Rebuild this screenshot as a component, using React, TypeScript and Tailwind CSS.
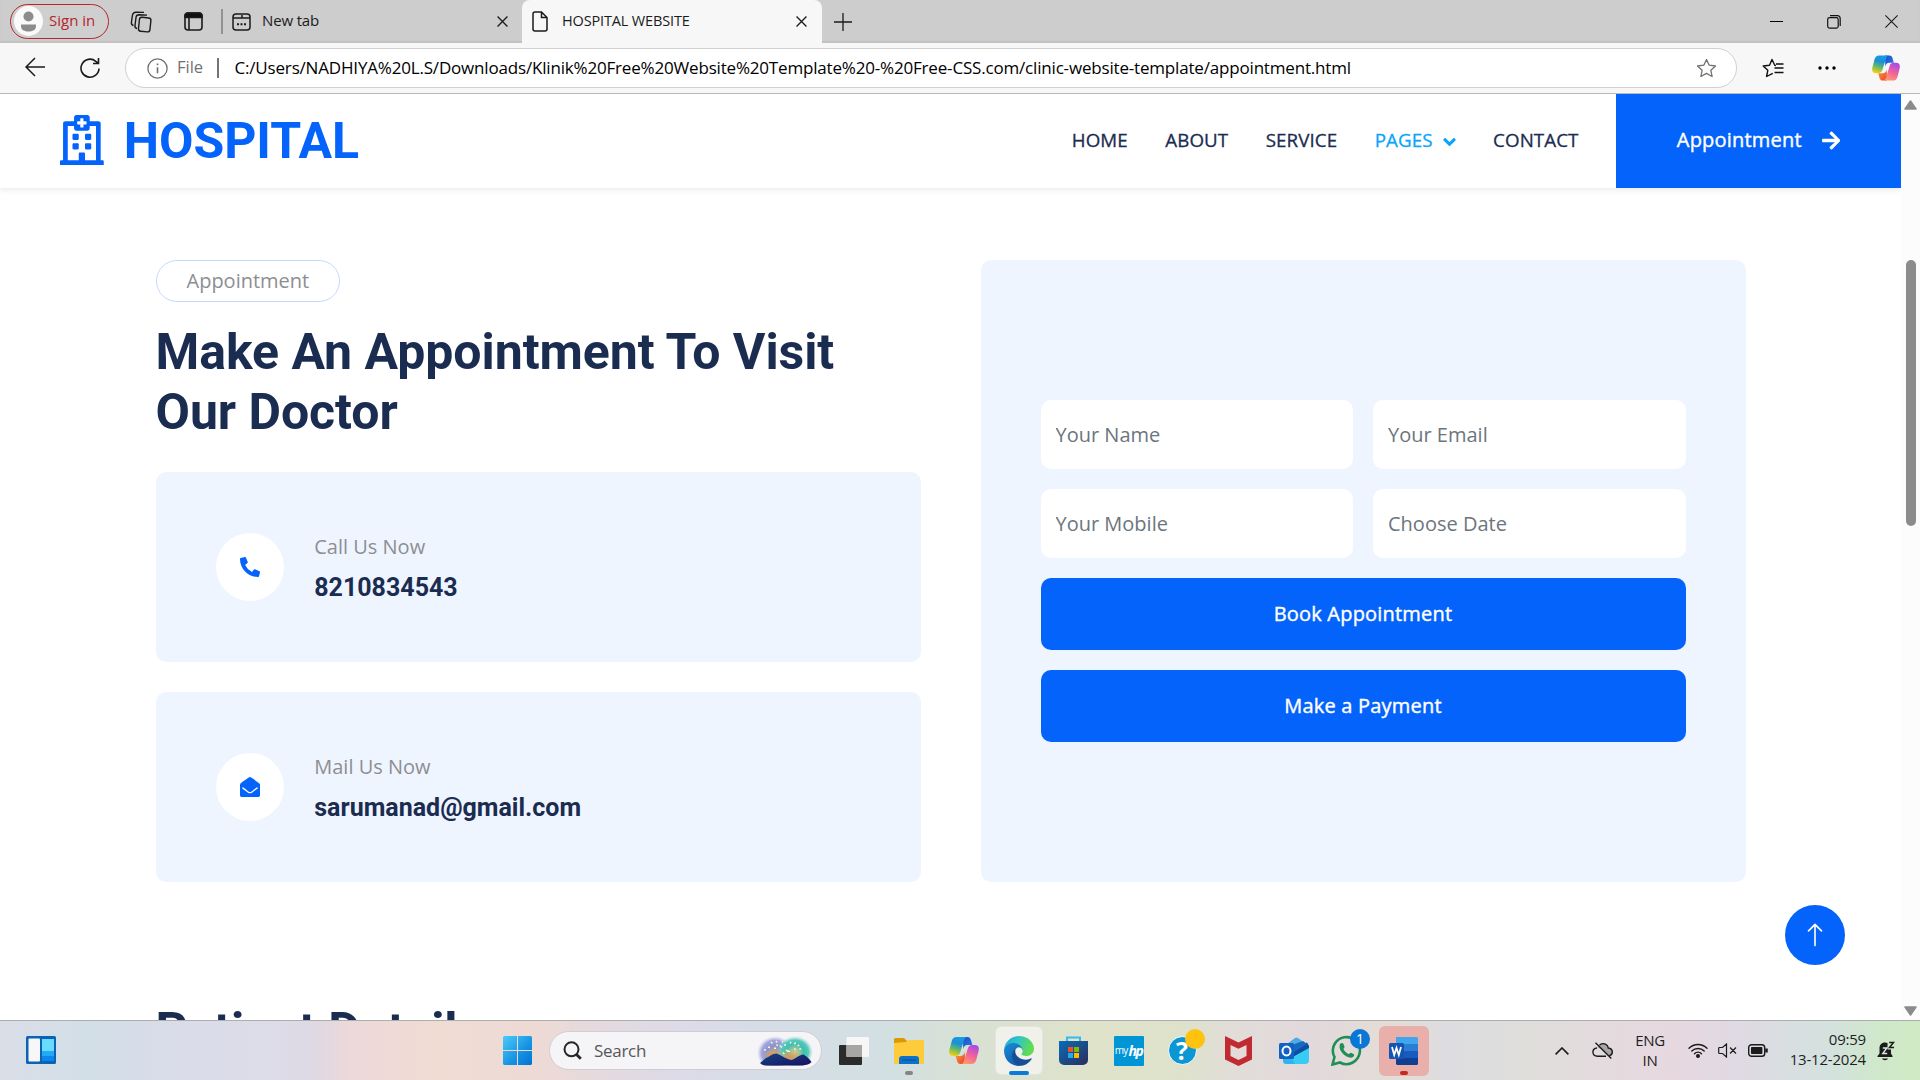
import React from "react";
import { FaRegHospital, FaAngleDown, FaArrowRight, FaPhoneAlt, FaEnvelopeOpen } from "react-icons/fa";
import { BsArrowUp } from "react-icons/bs";

const OPEN = "font-['Open_Sans',sans-serif]";
const ROBOTO = "font-['Roboto',sans-serif]";

function CloseX({ className = "" }: { className?: string }) {
  return (
    <svg className={className} viewBox="0 0 10 10" fill="none" stroke="#1a1a1a" strokeWidth="1.2">
      <path d="M0.5 0.5 9.5 9.5M9.5 0.5 0.5 9.5" />
    </svg>
  );
}

function Copilot({ id, className }: { id: string; className: string }) {
  return (
    <svg className={className} viewBox="0 0 30 27">
      <defs>
        <linearGradient id={id + "a"} x1="0.6" y1="0" x2="0.3" y2="1">
          <stop offset="0" stopColor="#159de8" />
          <stop offset="0.35" stopColor="#1c8fd6" />
          <stop offset="0.65" stopColor="#62b96a" />
          <stop offset="1" stopColor="#f4cf12" />
        </linearGradient>
        <linearGradient id={id + "b"} x1="0.7" y1="0" x2="0.3" y2="1">
          <stop offset="0" stopColor="#a64be8" />
          <stop offset="0.5" stopColor="#f0609c" />
          <stop offset="1" stopColor="#ff9a6c" />
        </linearGradient>
        <linearGradient id={id + "c"} x1="0" y1="0" x2="1" y2="1">
          <stop offset="0" stopColor="#1b4fc4" />
          <stop offset="1" stopColor="#2a7df0" />
        </linearGradient>
        <linearGradient id={id + "d"} x1="0" y1="0" x2="1" y2="1">
          <stop offset="0" stopColor="#f9a13a" />
          <stop offset="1" stopColor="#e9412f" />
        </linearGradient>
      </defs>
      <path d="M14 0h4.5c2.2 0 3 1.3 3.6 3.4L23.400 8h-4.900c-2.500 0-3.600 1.500-4.300 3.900Z" fill={`url(#${id}c)`} />
      <path d="M16 27h-4.500c-2.200 0-3-1.300-3.600-3.400L6.600 19h4.900c2.500 0 3.600-1.500 4.300-3.900Z" fill={`url(#${id}d)`} />
      <path d="M7.600 0h10.200c-1.500.3-2.300 1.500-3 3.800l-3.600 11.700c-.7 2.300-2 3.500-4.400 3.500H4.300C.6 19-.4 16.500.4 13L2.700 4.200C3.500 1.400 5 0 7.600 0Z" fill={`url(#${id}a)`} />
      <path d="M22.400 27H12.200c1.500-.3 2.300-1.500 3-3.800l3.600-11.700c.7-2.300 2-3.500 4.400-3.500h2.500c3.700 0 4.700 2.500 3.900 6l-2.300 8.800c-.8 2.800-2.300 4.200-4.900 4.200Z" fill={`url(#${id}b)`} />
    </svg>
  );
}

function TabStrip() {
  return (
    <div className="flex h-[43px] items-center bg-[#cdcdcd] text-[15px] text-[#1b1b1b] shadow-[inset_0_-2px_1px_#c2c2c2]">
      <div className="ml-[10px] mb-[1px] flex h-[35px] w-[99px] shrink-0 items-center rounded-full border-[1.5px] border-[#b3262b] bg-[#d0cfcf]">
        <svg className="ml-[3px] h-[30px] w-[29px]" viewBox="0 0 29 30">
          <ellipse cx="14.500" cy="15" rx="14.500" ry="15" fill="#fafafa" />
          <circle cx="14.500" cy="10.500" r="5" fill="#8c8c8c" />
          <path d="M7 18.500h15c.5 5-2.500 7-7.500 7s-8-2-7.500-7Z" fill="#8c8c8c" />
        </svg>
        <span className="ml-[6px] whitespace-nowrap pb-[2px] text-[#b3262b]">Sign in</span>
      </div>
      <svg className="ml-[21px] h-[22px] w-[22px] shrink-0" viewBox="0 0 22 22" fill="none" stroke="#1b1b1b" strokeWidth="1.400">
        <rect x="9" y="6.500" width="11.500" height="14" rx="2.500" transform="rotate(6 14 13)" />
        <path d="M7 17.500c-1.500-.3-2.200-1.500-2-3L6 6.500c.2-1.700 1.200-2.700 3-2.700l8 .3M3.500 14.500C2 14 1.200 13 1.400 11.500l1-7C2.700 2.500 4 1.200 6 1.200l8 .2" />
      </svg>
      <svg className="ml-[32px] h-[19px] w-[19px] shrink-0" viewBox="0 0 19 19" fill="none" stroke="#1b1b1b" strokeWidth="1.600">
        <rect x="1" y="1" width="17" height="17" rx="3" />
        <path d="M1 5V4a3 3 0 0 1 3-3h11a3 3 0 0 1 3 3v1.500H1Z" fill="#111" />
        <path d="M5 6v12" />
      </svg>
      <div className="ml-[18px] h-[25px] w-[2px] shrink-0 bg-[#929292]" />
      <svg className="ml-[9px] h-[18px] w-[19px] shrink-0" viewBox="0 0 19 18" fill="none" stroke="#1b1b1b" strokeWidth="1.500">
        <rect x="1" y="1" width="17" height="16" rx="3" />
        <path d="M1 5h7l2 0V2M10 5h8" />
        <path d="M5 11.200h2M8.500 11.200h2M12 11.200h2" strokeWidth="2" />
      </svg>
      <span className="ml-[11px] w-[235px] shrink-0 pb-[2px] tracking-[-0.15px]">New tab</span>
      <CloseX className="h-[11px] w-[11px] shrink-0" />
      <div className="ml-[14px] flex h-[43px] w-[300px] shrink-0 items-center rounded-t-[8px] bg-[#f7f7f7]">
        <svg className="ml-[10px] h-[21px] w-[16px]" viewBox="0 0 16 21" fill="none" stroke="#1b1b1b" strokeWidth="1.500">
          <path d="M3 1h6.500L15 6.500V18a2 2 0 0 1-2 2H3a2 2 0 0 1-2-2V3a2 2 0 0 1 2-2ZM9.500 1v5.500H15" />
        </svg>
        <span className="ml-[14px] w-[234px] whitespace-nowrap pb-[2px] text-[14.500px] tracking-[-0.15px]">HOSPITAL WEBSITE</span>
        <CloseX className="h-[11px] w-[11px]" />
      </div>
      <svg className="ml-[12px] h-[18px] w-[18px] shrink-0" viewBox="0 0 18 18" stroke="#1b1b1b" strokeWidth="1.300">
        <path d="M9 0v18M0 9h18" />
      </svg>
      <div className="ml-auto mr-[22px] flex items-center">
        <div className="h-px w-[13px] bg-black" />
        <svg className="ml-[44px] h-[14px] w-[14px]" viewBox="0 0 14 14" fill="none" stroke="#111" strokeWidth="1.200">
          <rect x="0.700" y="2.600" width="10.500" height="10.500" rx="1.800" />
          <path d="M3 .7h7.500a2.700 2.700 0 0 1 2.700 2.700V11" />
        </svg>
        <svg className="ml-[44px] h-[13px] w-[13px]" viewBox="0 0 13 13" stroke="#1a1a1a" strokeWidth="1.100">
          <path d="M.4.400l12.200 12.200M12.600.4.400 12.600" />
        </svg>
      </div>
    </div>
  );
}

const STAR = "m10.500 1.500 2.700 5.700 6.300.8-4.600 4.300 1.200 6.200-5.600-3.100-5.600 3.100 1.200-6.200L1.500 8l6.300-.8Z";

function Toolbar() {
  return (
    <div className="flex h-[51px] items-center border-b border-[#b9b9b9] bg-[#f7f7f7]">
      <svg className="ml-[25px] mb-[2px] h-[20px] w-[20px]" viewBox="0 0 20 20" fill="none" stroke="#1b1b1b" strokeWidth="1.500">
        <path d="M20 10H1M10 1 1 10l9 9" />
      </svg>
      <svg className="ml-[35px] mb-[1px] h-[22px] w-[20px]" viewBox="0 0 20 22" fill="none" stroke="#1b1b1b" strokeWidth="1.600">
        <path d="M19 11.500a9 9 0 1 1-3.200-7.200L18 6.200M18.500 1v5.500H13" />
      </svg>
      <div className="ml-[25px] flex h-[40px] w-[1612px] items-center rounded-full border border-[#d0d0d0] bg-white">
        <svg className="ml-[21px] h-[21px] w-[21px]" viewBox="0 0 21 21" fill="none" stroke="#717171" strokeWidth="1.300">
          <circle cx="10.500" cy="10.500" r="9.600" />
          <path d="M10.500 9.300v6M10.500 5.500v1.800" strokeWidth="1.600" />
        </svg>
        <span className="ml-[9px] w-[40px] pb-[1px] text-[16.500px] text-[#717171]">File</span>
        <div className="h-[20px] w-[1.500px] bg-[#757575]" />
        <span className="ml-[16px] whitespace-nowrap pb-[1px] text-[17px] tracking-[-0.18px] text-black">
          C:/Users/NADHIYA%20L.S/Downloads/Klinik%20Free%20Website%20Template%20-%20Free-CSS.com/clinic-website-template/appointment.html
        </span>
        <svg className="ml-auto mr-[19px] h-[20px] w-[21px]" viewBox="0 0 21 20" fill="none" stroke="#717171" strokeWidth="1.300" strokeLinejoin="round">
          <path d={STAR} />
        </svg>
      </div>
      <svg className="ml-[25px] h-[20px] w-[22px]" viewBox="0 0 22 20" fill="none" stroke="#111" strokeWidth="1.400" strokeLinejoin="round">
        <path d="M14 7.500 12.800 7.200 10 1.500 7.500 7.200 1.200 8l4.600 4.300L4.600 18.500 10.800 15.300M12.500 10h9M12.500 14.500h9M14 6h7.500" />
      </svg>
      <svg className="ml-[33px] h-[4px] w-[20px]" viewBox="0 0 20 4">
        <circle cx="3" cy="2" r="1.700" /><circle cx="10" cy="2" r="1.700" /><circle cx="17" cy="2" r="1.700" />
      </svg>
      <Copilot id="tb" className="ml-[35px] h-[26px] w-[28px]" />
    </div>
  );
}

const MEDIUM = "tracking-[0.2px] [-webkit-text-stroke:0.4px_white]";

function SiteNav() {
  return (
    <nav className="relative flex h-[94px] shrink-0 items-center bg-white shadow-[0_2.5px_5px_rgba(0,0,0,0.075)]">
      <div className={`mb-[2px] ml-[60px] flex items-center text-[50px] font-bold leading-[60px] tracking-[-0.05px] text-[#0463fa] ${ROBOTO}`}>
        <FaRegHospital className="mr-[20px] h-[50px] w-[43.750px]" />
        <span className="pt-[1px]">HOSPITAL</span>
      </div>
      <div className="mb-[2px] ml-auto mr-[37.500px] flex items-center gap-[37.500px] whitespace-nowrap text-[18.750px] leading-[28px] tracking-[0.08px] text-[#1b2c51] [-webkit-text-stroke:0.3px]">
        <span>HOME</span>
        <span>ABOUT</span>
        <span>SERVICE</span>
        <span className="flex items-center text-[#0aa5fb]">
          PAGES
          <FaAngleDown className="ml-[10px] mt-[3px] h-[20px] w-[13px]" />
        </span>
        <span>CONTACT</span>
      </div>
      <button className={`flex h-full w-[285px] items-center justify-center bg-[#0463fa] pb-[2px] text-[20px] text-white ${MEDIUM}`}>
        Appointment
        <FaArrowRight className="ml-[20px] h-[21px] w-[18.500px]" />
      </button>
    </nav>
  );
}

function ContactCard({ icon, label, value }: { icon: React.ReactNode; label: string; value: string }) {
  return (
    <div className="flex h-[190px] items-center rounded-[10px] bg-[#eff5ff] p-[60px]">
      <div className="flex h-[68.750px] w-[68.750px] items-center justify-center rounded-full bg-white text-[#0463fa]">{icon}</div>
      <div className="ml-[30px]">
        <p className="mb-[10px] text-[20px] leading-[30px] text-[#8d8e92]">{label}</p>
        <h5 className={`pt-[1px] text-[25px] font-bold leading-[29px] text-[#1b2c51] ${ROBOTO}`}>{value}</h5>
      </div>
    </div>
  );
}

function Field({ text }: { text: string }) {
  return (
    <input
      placeholder={text}
      className="h-[69px] w-full min-w-0 rounded-[10px] bg-white px-[15px] text-[20px] placeholder:text-[#6c757d] placeholder:opacity-100"
    />
  );
}

function Site() {
  const h1 = `text-[50px] font-bold leading-[60px] tracking-[-0.06px] text-[#1b2c51] ${ROBOTO}`;
  const btn = `h-[72px] rounded-[10px] bg-[#0463fa] text-[20px] text-white ${MEDIUM}`;
  return (
    <div className="flex h-[926px]">
      <div className="relative flex w-[1901px] flex-col overflow-hidden bg-white">
        <SiteNav />
        <main className="mx-auto mt-[72px] w-[1590px] shrink-0">
          <section className="grid h-[622px] grid-cols-2 gap-[60px]">
            <div>
              <p className="mb-[20px] flex h-[42px] w-fit items-center rounded-full border border-[#c3dafe] px-[30px] text-[20px] text-[#8d8e92]">
                Appointment
              </p>
              <h1 className={`mb-[30px] ${h1}`}>
                Make An Appointment To Visit
                <br />
                Our Doctor
              </h1>
              <div className="flex flex-col gap-[30px]">
                <ContactCard icon={<FaPhoneAlt className="h-[20px] w-[20px]" />} label="Call Us Now" value="8210834543" />
                <ContactCard icon={<FaEnvelopeOpen className="h-[20px] w-[20px]" />} label="Mail Us Now" value="sarumanad@gmail.com" />
              </div>
            </div>
            <div className="flex flex-col justify-center gap-[20px] rounded-[10px] bg-[#eff5ff] px-[60px]">
              <div className="grid grid-cols-2 gap-[20px]">
                <Field text="Your Name" />
                <Field text="Your Email" />
                <Field text="Your Mobile" />
                <Field text="Choose Date" />
              </div>
              <button className={btn}>Book Appointment</button>
              <button className={btn}>Make a Payment</button>
            </div>
          </section>
          <h1 className={`mt-[119px] ${h1}`}>Patient Details</h1>
        </main>
        <button className="absolute bottom-[55px] right-[56px] flex h-[60px] w-[60px] items-center justify-center rounded-full bg-[#0463fa] text-white">
          <BsArrowUp className="h-[26px] w-[26px]" />
        </button>
      </div>
      <div className="flex w-[19px] flex-col items-center bg-[#fcfcfc] pb-[4px] pt-[6px]">
        <svg className="h-[10px] w-[13px]" viewBox="0 0 13 10"><path d="M6.500 1 12 9H1Z" fill="#8b8b8b" stroke="#8b8b8b" strokeWidth="1.500" strokeLinejoin="round" /></svg>
        <div className="mt-[150px] h-[266px] w-[10px] rounded-full bg-[#8b8b8b]" />
        <svg className="mt-auto h-[10px] w-[13px]" viewBox="0 0 13 10"><path d="M6.500 9 12 1H1Z" fill="#8b8b8b" stroke="#8b8b8b" strokeWidth="1.500" strokeLinejoin="round" /></svg>
      </div>
    </div>
  );
}

function Cell({ children }: { children: React.ReactNode }) {
  return <div className="relative flex h-[58px] w-[55px] shrink-0 items-center justify-center">{children}</div>;
}

function EdgeIcon() {
  return (
    <svg className="h-[30px] w-[30px]" viewBox="0 0 256 256">
      <defs>
        <linearGradient id="e1" x1="0" y1="0" x2="1" y2="0.300"><stop offset="0" stopColor="#1fa6e0" /><stop offset="0.500" stopColor="#31c5c4" /><stop offset="1" stopColor="#62dc50" /></linearGradient>
        <linearGradient id="e2" x1="0" y1="0" x2="0.600" y2="1"><stop offset="0" stopColor="#1b8fd8" /><stop offset="1" stopColor="#0f5cae" /></linearGradient>
      </defs>
      <path d="M231 190.500a93 93 0 0 1-10.600 4.700 102 102 0 0 1-36 6.500c-47.400 0-88.700-32.600-88.700-74.500 0-11.400 6.500-21.900 16.400-27.400-42.900 1.800-53.900 46.500-53.900 72.600 0 74 68.200 81.500 82.900 81.500 7.900 0 19.900-2.300 27-4.600l1.400-.4a128 128 0 0 0 66.600-52.800 4 4 0 0 0-5.100-5.600Z" fill="#174f95" />
      <path d="M105.700 241.400a79.200 79.200 0 0 1-22.700-21.300 80.700 80.700 0 0 1 29.500-120c3.200-1.500 8.400-4.100 15.500-4a32.400 32.400 0 0 1 25.700 13 32 32 0 0 1 6.300 18.700c0-.2 24.500-79.600-80-79.600-43.900 0-80 41.600-80 78.200a130 130 0 0 0 12.100 56 128 128 0 0 0 156.400 67 75.500 75.500 0 0 1-62.800-8Z" fill="url(#e2)" />
      <path d="M152.300 148.900c-.9 1-3.400 2.500-3.400 5.600 0 2.600 1.700 5.200 4.800 7.300 14.300 10 41.400 8.600 41.500 8.600a59.600 59.600 0 0 0 30.200-8.300 61.400 61.400 0 0 0 30.500-52.900c.2-22.400-8-37.300-11.300-43.900C223.500 23.900 177.700 0 128 0A128 128 0 0 0 0 126.200c.5-36.500 36.800-66 80-66 3.500 0 23.500.3 42 10a72.500 72.500 0 0 1 30.900 29.200c6.100 10.700 7.200 24.200 7.200 29.500s-2.700 13.300-7.800 20Z" fill="url(#e1)" />
    </svg>
  );
}

function Taskbar() {
  return (
    <div className="flex h-[60px] items-center border-t border-[#adadad] bg-[linear-gradient(90deg,#dadee7_0px,#d2dfe7_90px,#dadce9_180px,#dddce9_270px,#ded9e3_315px,#edd8da_350px,#f0dcd3_430px,#eddad6_545px,#e0dae2_630px,#dddbe8_680px,#d5dde6_770px,#d3e0e2_890px,#d8e1d4_970px,#dfe3c9_1100px,#dee2cb_1180px,#e1ddd8_1230px,#e2d9dc_1310px,#e3ddd6_1390px,#dddce0_1450px,#dfdedb_1530px,#e7d8e0_1675px,#dfdae3_1740px,#d3e2de_1830px,#d0e8ca_1880px,#cfeac4_1920px)]">
      <svg className="ml-[26px] mb-[1px] h-[28px] w-[30px] shrink-0" viewBox="0 0 30 28">
        <rect width="30" height="28" rx="1.500" fill="#0a63b5" />
        <rect x="2.500" y="2.500" width="11.500" height="23" rx="1" fill="#f7f7f7" />
        <path d="M16 3h12v12H16Z" fill="#68dbff" /><path d="M16 15h12v5H16Z" fill="#25a9f7" /><path d="M16 20h12v5H16Z" fill="#0b87ec" />
      </svg>
      <svg className="ml-[447px] h-[29px] w-[29px] shrink-0" viewBox="0 0 29 29">
        <defs><linearGradient id="win" x1="0" y1="0" x2="1" y2="1"><stop offset="0" stopColor="#4ccbfa" /><stop offset="0.600" stopColor="#1592e2" /><stop offset="1" stopColor="#0072d2" /></linearGradient></defs>
        <path d="M1 0h13v14H0V1Zm14 0h13l1 1v13H15ZM0 15h14v14H1l-1-1Zm15 0h14v13l-1 1H15Z" fill="url(#win)" />
      </svg>
      <div className="ml-[17px] flex h-[39px] w-[273px] shrink-0 items-center rounded-full border border-[#d0cdd2] bg-[#f5f4f7]">
        <svg className="ml-[13px] h-[19px] w-[19px]" viewBox="0 0 19 19" fill="none" stroke="#262626" strokeWidth="2"><circle cx="8.500" cy="8.300" r="7" /><path d="m13.500 13.500 4.300 4.300" strokeWidth="2.800" /></svg>
        <span className="ml-[12px] text-[17px] tracking-[-0.3px] text-[#575757]">Search</span>
        <svg className="ml-auto mr-[8px] h-[31px] w-[56px]" viewBox="0 0 56 31">
          <defs>
            <radialGradient id="g1"><stop offset="0" stopColor="#c9a866" /><stop offset="0.450" stopColor="#8b93d4" /><stop offset="0.750" stopColor="#a0a6dc" /><stop offset="1" stopColor="#c5c8ea" stopOpacity="0" /></radialGradient>
            <radialGradient id="g2"><stop offset="0" stopColor="#d8cf9a" /><stop offset="0.500" stopColor="#3fc0ae" /><stop offset="0.750" stopColor="#58c9bd" /><stop offset="1" stopColor="#9adbd5" stopOpacity="0" /></radialGradient>
            <radialGradient id="g3"><stop offset="0" stopColor="#f08a5a" /><stop offset="1" stopColor="#e9b34c" stopOpacity="0" /></radialGradient>
            <linearGradient id="g4" x1="0" y1="0" x2="1" y2="1"><stop offset="0" stopColor="#144783" /><stop offset="1" stopColor="#1b0d61" /></linearGradient>
          </defs>
          <ellipse cx="18" cy="18" rx="18" ry="17" fill="url(#g1)" />
          <ellipse cx="38" cy="17" rx="18" ry="16" fill="url(#g2)" />
          <ellipse cx="33" cy="22" rx="14" ry="8" fill="url(#g3)" />
          <ellipse cx="14" cy="20" rx="8" ry="5" fill="url(#g3)" />
          <path d="M3 28 9 23c3-1 6-4.500 10.500-4.500 5 1.500 9 5.500 15 6.500 4-1 7-5 12-5.500 3 1.500 6 4.500 8 7.500-2 2.500-5 3-9 3.500H10c-3 0-5-.5-7-2.500Z" fill="url(#g4)" />
          <path d="M28 9v2m-3-5 .8 1.500M19 6l1 1.500m-6-.5 1.500 1.500M11 12l2 .5m-6 2.500 2-.3m8-1.500h2m10 1.500 2 2m3-10-.8 1.800m5.500-1-1.500 1.800m5 .5-1.500 1m3.500 3-2 .3m-5-.5 1.700 1m-8 1 2 1m-10-6 2 2m1 5 1.500 1.500m-8-9.500 1.500 1" stroke="#fff6d4" strokeWidth="1.400" />
        </svg>
      </div>
      <div className="ml-[4px] flex">
        <Cell>
          <svg className="h-[28px] w-[30px]" viewBox="0 0 30 28"><rect y="8" width="23" height="20" rx="1" fill="#2b2b2b" /><rect x="7.500" width="22.500" height="20" rx="1" fill="#f7f7f7" /><path d="M7.500 8H23v12H7.500Z" fill="#a7a6a5" /></svg>
        </Cell>
        <Cell>
          <svg className="h-[28px] w-[30px]" viewBox="0 0 30 28"><path d="M1 1h9l3 3v6H0V2Z" fill="#d99a05" /><path d="M0 6 12 5l2-2h15l1 1v23H0Z" fill="#fecb3c" /><path d="M5 27v-5c0-2 1-3 3-3h14c2 0 3 1 3 3v5Z" fill="#0d72c9" /><path d="M8 23h14" stroke="#084c92" strokeWidth="1" /></svg>
          <div className="absolute bottom-[5px] left-[23.500px] h-[4px] w-[8px] rounded-full bg-[#858585]" />
        </Cell>
        <Cell><Copilot id="tk" className="h-[27px] w-[30px]" /></Cell>
        <Cell>
          <div className="flex h-[49px] w-[48px] items-center justify-center rounded-[6px] border border-[#e4e5dd] bg-[#f0f1eb]"><EdgeIcon /></div>
          <div className="absolute bottom-[5px] left-[17.500px] h-[4px] w-[20px] rounded-full bg-[#0a7cd8]" />
        </Cell>
        <Cell>
          <svg className="h-[29px] w-[29px]" viewBox="0 0 29 29">
            <defs><linearGradient id="store" x1="0" y1="0" x2="1" y2="1"><stop offset="0" stopColor="#0a6cb8" /><stop offset="1" stopColor="#2b2c5c" /></linearGradient></defs>
            <path d="M8 5V1.500h13V5" fill="none" stroke="#38b9ee" strokeWidth="2" />
            <path d="M0 5h29v19a5 5 0 0 1-5 5H5a5 5 0 0 1-5-5Z" fill="url(#store)" />
            <path d="M9 11h5v5H9Z" fill="#f25022" /><path d="M15 11h5v5h-5Z" fill="#7fba00" /><path d="M9 17h5v5H9Z" fill="#1fa9f0" /><path d="M15 17h5v5h-5Z" fill="#ffb900" />
          </svg>
        </Cell>
        <Cell>
          <div className="flex h-[30px] w-[30px] items-center justify-center rounded-[1px] bg-[#0096d6] pb-[1px] text-white">
            <span className="text-[10px] tracking-[-0.8px]">my</span><span className="ml-[1px] text-[14px] font-bold italic tracking-[-1.500px]">hp</span>
          </div>
        </Cell>
        <Cell>
          <div className="mr-[3px] flex h-[29px] w-[29px] items-center justify-center rounded-full border-[1.500px] border-white bg-[#0c97d4] text-[25px] font-bold leading-none text-white">?</div>
          <div className="absolute right-[6px] top-[7px] h-[20px] w-[20px] rounded-full bg-[#ffc20e]" />
        </Cell>
        <Cell>
          <svg className="h-[30px] w-[27px]" viewBox="0 0 27 30"><path d="M0 0 13.500 6.500 27 0v23.500L13.500 30 0 23.500Z" fill="#c02a30" /><path d="m5.500 9 8 3.800 8-3.800v11l-8 4-8-4Z" fill="#e4dbd9" /></svg>
        </Cell>
        <Cell>
          <svg className="h-[27px] w-[30px]" viewBox="0 0 30 27"><path d="M4 10 16 1c1-.8 2-.8 3 0l11 8v5H4Z" fill="#4fa9e4" /><path d="M13 12 28 5.500l2 3.500v3L15 20Z" fill="#0b4fa3" /><path d="m13 8 11-4 4 3-13 8Z" fill="#1668c0" /><path d="M30 11v12a4 4 0 0 1-4 4H9l3-6Z" fill="#38ccf4" /><path d="M4 20v4c0 2 1 3 3 3h9l-4-7Z" fill="#2fb4ec" /><rect y="6" width="15" height="16" rx="1.500" fill="#1262c4" /><ellipse cx="7.500" cy="14" rx="4" ry="4.500" fill="none" stroke="#fff" strokeWidth="2" /></svg>
        </Cell>
        <Cell>
          <svg className="mr-[4px] h-[31px] w-[31px]" viewBox="0 0 31 31" fill="none"><path d="M1.500 29.500 3.500 22A13.500 13.500 0 1 1 9 27.500Z" stroke="#1f8f56" strokeWidth="2.600" /><path d="M9 9c1-1.500 3-1.500 3.500 0l1 2.500c.3 1-1 1.800-1 2.500 1 2.500 3 4 5 5 .8.200 1.700-1.500 2.500-1.200l2.500 1.200c1.200.6.800 2-.5 3-2 1.500-5 .5-8-1.500-4-3-6.500-7.500-5-11.500Z" fill="#1f8f56" /></svg>
          <div className="absolute right-[6px] top-[7px] flex h-[20px] w-[20px] items-center justify-center rounded-full bg-[#0a77d5] text-[14px] text-white">1</div>
        </Cell>
        <Cell>
          <div className="flex h-[50px] w-[50px] items-center justify-center rounded-[6px] bg-[#e8afab]">
            <svg className="h-[28px] w-[29px]" viewBox="0 0 29 28"><path d="M7 0h21l1 1v6H7Z" fill="#41a5ee" /><path d="M7 7h22v7H7Z" fill="#2b7cd3" /><path d="M7 14h22v7H7Z" fill="#185abd" /><path d="M7 21h22v6l-1 1H8l-1-1Z" fill="#103f91" /><rect y="6" width="15" height="16" rx="1.500" fill="#1454b3" /><path d="m3 10 2.200 8 2.300-7 2.300 7L12 10" fill="none" stroke="#fff" strokeWidth="1.800" /></svg>
          </div>
          <div className="absolute bottom-[5px] left-[23.500px] h-[4px] w-[8px] rounded-full bg-[#c42b1c]" />
        </Cell>
      </div>
      <div className="ml-auto mr-[25px] flex items-center text-[15px] leading-[20px] text-[#1f1f1f]">
        <svg className="h-[8px] w-[14px]" viewBox="0 0 14 8" fill="none" stroke="#1b1b1b" strokeWidth="1.600"><path d="m.6 7.400 6.400-6.400 6.400 6.400" /></svg>
        <svg className="ml-[23px] h-[17px] w-[21px]" viewBox="0 0 21 17" fill="none" stroke="#1b1b1b" strokeWidth="1.400">
          <path d="M5.500 5.500C7 2 10 1 12 1.500c2.500.5 4 2.500 4.500 4.500 2.500.3 4 2 3.800 4.500-.3 2-2 3.300-4 3.300L9 7Z" fill="#a8a7a5" stroke="none" />
          <path d="M7.500 3C12 0 15.800 2.500 16.300 6c5 .5 5.200 6.500 1.200 7.600M14 14.200H5.500c-5.700 0-6.300-7.600-.5-8.200M3.500.8l15.800 15.700" />
        </svg>
        <div className="mb-[2px] ml-[21px] flex w-[32px] flex-col items-center tracking-[-0.3px]"><span>ENG</span><span>IN</span></div>
        <svg className="ml-[22px] h-[15px] w-[20px]" viewBox="0 0 20 15" fill="none" stroke="#1b1b1b" strokeWidth="1.400" strokeLinecap="round">
          <path d="M1 5.200a12.700 12.700 0 0 1 18 0M3.800 8a8.800 8.800 0 0 1 12.400 0M6.500 10.700a5 5 0 0 1 7 0" /><circle cx="10" cy="13" r="1.300" fill="#1b1b1b" />
        </svg>
        <svg className="ml-[10px] h-[15px] w-[19px]" viewBox="0 0 19 15" fill="none" stroke="#1b1b1b" strokeWidth="1.200"><path d="M8.500 1v13l-4-3.500h-3a.8.800 0 0 1-.8-.8V5.300c0-.5.300-.8.800-.8h3ZM12 4.500l6 6M18 4.500l-6 6" /></svg>
        <svg className="ml-[11px] h-[13px] w-[20px]" viewBox="0 0 20 13" fill="none" stroke="#1b1b1b" strokeWidth="1.400"><rect x="0.700" y="0.700" width="16" height="11.600" rx="2.800" /><rect x="3" y="3" width="11.400" height="7" rx="0.800" fill="#1b1b1b" stroke="none" /><path d="M18.500 4.500v4" strokeWidth="2.500" /></svg>
        <div className="mb-[4px] ml-[18px] flex w-[80px] flex-col items-end whitespace-nowrap tracking-[-0.2px]"><span>09:59</span><span>13-12-2024</span></div>
        <svg className="ml-[11px] h-[20px] w-[18px]" viewBox="0 0 18 20" fill="#1b1b1b">
          <path d="M8 1.500C4.500 1.500 2.500 4 2.500 7V12.500L.5 15V16h15V15L14 12.500V8.500H10.500V1.900ZM5 17.500h6c-.5 2.300-5.500 2.300-6 0Z" />
          <path d="M5.800 7h4l-4 5.500h4.400" fill="none" stroke="#dceadb" strokeWidth="1.400" />
          <path d="M12.200 1.500h4.300l-4 5h4.500" fill="none" stroke="#1b1b1b" strokeWidth="1.500" />
        </svg>
      </div>
    </div>
  );
}

export default function App() {
  return (
    <div className={`flex h-[1080px] w-[1920px] flex-col overflow-hidden ${OPEN}`}>
      <TabStrip />
      <Toolbar />
      <Site />
      <Taskbar />
    </div>
  );
}
